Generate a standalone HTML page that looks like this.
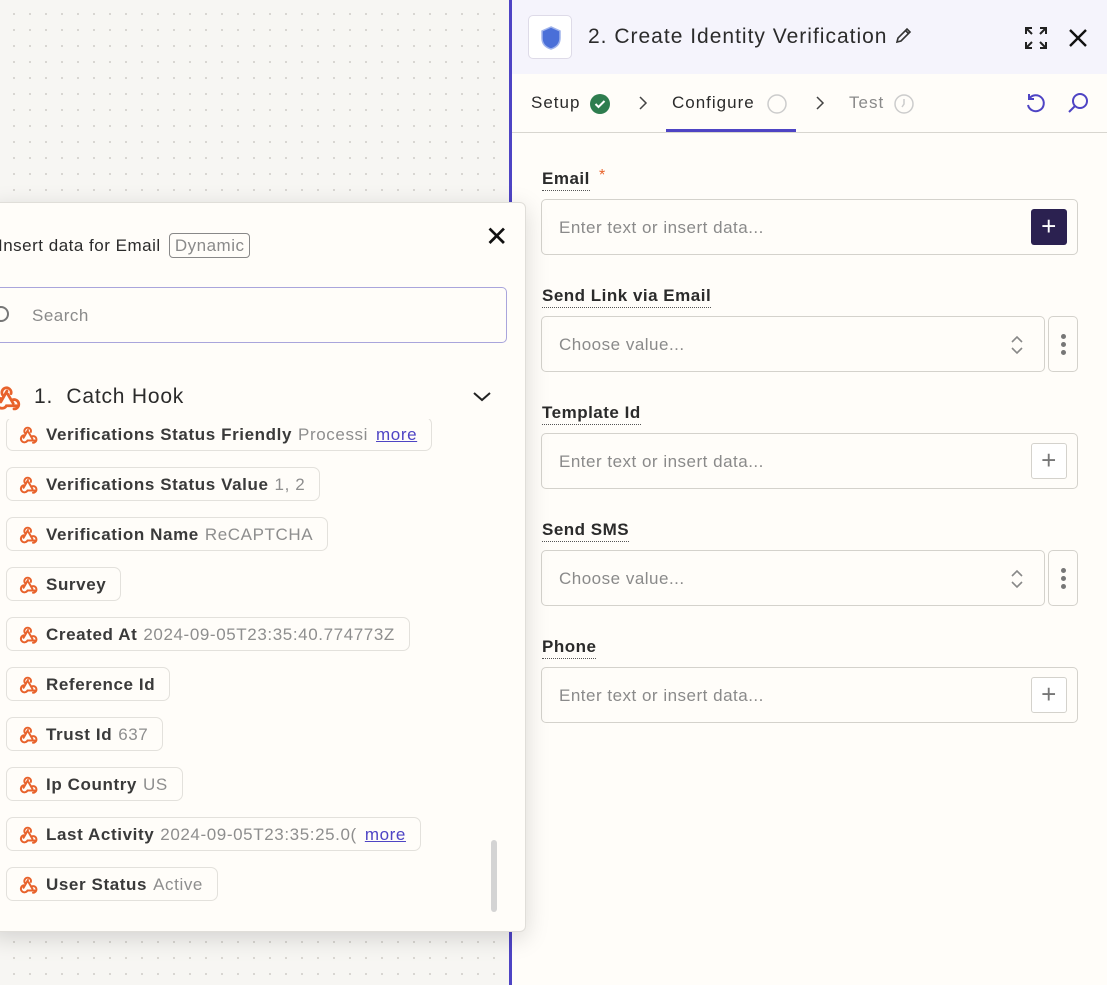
<!DOCTYPE html>
<html><head><meta charset="utf-8"><style>
*{box-sizing:border-box;margin:0;padding:0}
body{width:1107px;height:985px;overflow:hidden;position:relative;font-family:"Liberation Sans",sans-serif;letter-spacing:.5px;background:#f7f6f3;
background-image:radial-gradient(circle,#d6d4cf 1px,transparent 1.2px);background-size:16px 16px;background-position:6px 6px}
.panel{position:absolute;left:509px;top:0;width:598px;height:985px;background:#fffdf9;border-left:3px solid #4e44c4;z-index:1}
.hdr{height:74px;background:#f5f4fc;position:relative}
.logo{position:absolute;left:16px;top:15px;width:44px;height:44px;border:1px solid #dedbe8;border-radius:5px;background:#fff}
.title{position:absolute;left:76px;top:25px;font-size:21px;color:#2b2b2b;letter-spacing:1px}
.tabs{height:59px;border-bottom:1px solid #d8d6d0;position:relative;font-size:17px}
.tabs span{position:absolute;top:19px}
.lbl{position:absolute;font-size:17px;font-weight:bold;color:#2b2b2b;border-bottom:1px dotted #555;padding-bottom:1px}
.inp{position:absolute;height:56px;border:1px solid #d4d2cc;border-radius:5px;background:#fffdf9;font-size:17px;color:#8a8a8a;padding:18px 0 0 17px}
.pbtn{position:absolute;width:36px;height:36px;border:1px solid #d4d2cc;border-radius:3px;background:#fff;color:#777;font-size:26px;text-align:center;line-height:32px}
.dots{position:absolute;width:30px;height:56px;border:1px solid #d4d2cc;border-radius:5px}
.dots i{position:absolute;left:12px;width:5px;height:5px;border-radius:50%;background:#777}
.pop{position:absolute;left:-10px;top:202px;width:536px;height:730px;background:#fffdf9;border:1px solid #e0ded9;border-radius:6px;box-shadow:0 6px 24px rgba(0,0,0,.15);overflow:hidden;z-index:5}
.list{position:absolute;left:0;top:216px;width:500px;height:500px;overflow:hidden}
.item{position:absolute;left:15px;height:34px;border:1px solid #e3e1dc;border-radius:7px;background:#fffdf9;font-size:17px;white-space:nowrap;padding:7px 14px 0 39px;letter-spacing:.6px}
.item b{color:#3a3a3a}
.item em{font-style:normal;color:#8e8e8e;margin-left:6px}
.item u{color:#4e44c4;margin-left:8px}
.item svg{position:absolute;left:11px;top:7px}
</style></head><body>
<svg width="0" height="0" style="position:absolute"><defs><g id="hk" fill="none" stroke="#e8622b" stroke-width="1.8" stroke-linecap="round"><path d="M6.6 7.6A3 3 0 1 1 11.6 6.2"/><path d="M9 4.5L5 11.5"/><path d="M5 9.3A3.2 3.2 0 1 0 8.6 14H15"/><path d="M9.5 6.5L13 12.5"/><path d="M12.5 10.2A3 3 0 1 1 13.5 16"/></g></defs></svg>

<div class="pop">
  <div style="position:absolute;left:7px;top:33px;font-size:17px;color:#2b2b2b">Insert data for Email <span style="border:1px solid #888;border-radius:4px;color:#8a8a8a;padding:2px 5px;font-size:17px;margin-left:3px">Dynamic</span></div>
  <div style="position:absolute;left:494px;top:17px;font-size:28px;color:#111">✕</div>
  <div style="position:absolute;left:0;top:84px;width:516px;height:56px;border:1.5px solid #a9a5dc;border-radius:5px"></div>
  <div style="position:absolute;left:2px;top:103px;width:16px;height:16px;border:2px solid #777;border-radius:50%"></div>
  <div style="position:absolute;left:41px;top:103px;font-size:17px;color:#8a8a8a">Search</div>
  <svg style="position:absolute;left:2px;top:181px" width="28" height="28" viewBox="0 0 18 18"><use href="#hk"/></svg>
  <div style="position:absolute;left:43px;top:182px;font-size:21px;color:#2b2b2b;letter-spacing:.8px">1.&nbsp; Catch Hook</div>
  <svg style="position:absolute;left:481px;top:187px" width="20" height="14"><path d="M2 3l8 7 8-7" fill="none" stroke="#222" stroke-width="2"/></svg>
  <div class="list">
    <div class="item" style="top:-2px"><svg width="20" height="20" viewBox="0 0 18 18"><use href="#hk"/></svg><b>Verifications Status Friendly</b><em>Processi</em><u>more</u></div>
    <div class="item" style="top:48px"><svg width="20" height="20" viewBox="0 0 18 18"><use href="#hk"/></svg><b>Verifications Status Value</b><em>1, 2</em></div>
    <div class="item" style="top:98px"><svg width="20" height="20" viewBox="0 0 18 18"><use href="#hk"/></svg><b>Verification Name</b><em>ReCAPTCHA</em></div>
    <div class="item" style="top:148px"><svg width="20" height="20" viewBox="0 0 18 18"><use href="#hk"/></svg><b>Survey</b></div>
    <div class="item" style="top:198px"><svg width="20" height="20" viewBox="0 0 18 18"><use href="#hk"/></svg><b>Created At</b><em>2024-09-05T23:35:40.774773Z</em></div>
    <div class="item" style="top:248px"><svg width="20" height="20" viewBox="0 0 18 18"><use href="#hk"/></svg><b>Reference Id</b></div>
    <div class="item" style="top:298px"><svg width="20" height="20" viewBox="0 0 18 18"><use href="#hk"/></svg><b>Trust Id</b><em>637</em></div>
    <div class="item" style="top:348px"><svg width="20" height="20" viewBox="0 0 18 18"><use href="#hk"/></svg><b>Ip Country</b><em>US</em></div>
    <div class="item" style="top:398px"><svg width="20" height="20" viewBox="0 0 18 18"><use href="#hk"/></svg><b>Last Activity</b><em>2024-09-05T23:35:25.0(</em><u>more</u></div>
    <div class="item" style="top:448px"><svg width="20" height="20" viewBox="0 0 18 18"><use href="#hk"/></svg><b>User Status</b><em>Active</em></div>
  </div>
  <div style="position:absolute;left:500px;top:637px;width:6px;height:72px;background:#d4d4d4;border-radius:3px"></div>
</div>

<div class="panel">
  <div class="hdr">
    <div class="logo"><svg style="margin:9px 0 0 10px" width="24" height="26" viewBox="0 0 24 26"><path d="M12 2L3 6v7c0 6 4 9.5 9 11 5-1.5 9-5 9-11V6z" fill="#4a6fd8" stroke="#9fb3ec" stroke-width="1.5"/></svg></div>
    <div class="title">2. Create Identity Verification <svg width="20" height="20" viewBox="0 0 20 20" style="vertical-align:-2px"><path d="M3 17l1-4 9-9 3 3-9 9zM11.5 5.5l3 3" fill="none" stroke="#333" stroke-width="1.6"/></svg></div>
    <svg style="position:absolute;left:512px;top:26px" width="24" height="24" viewBox="0 0 24 24" fill="none" stroke="#222" stroke-width="2"><path d="M2 8V2h6M2 2l6 6M16 2h6v6M22 2l-6 6M2 16v6h6M2 22l6-6M22 16v6h-6M22 22l-6-6"/></svg>
    <svg style="position:absolute;left:556px;top:28px" width="20" height="20" viewBox="0 0 20 20" stroke="#111" stroke-width="2.4"><path d="M2 2l16 16M18 2L2 18"/></svg>
  </div>
  <div class="tabs">
    <span style="left:19px;color:#2b2b2b;letter-spacing:1px">Setup</span>
    <svg style="position:absolute;left:78px;top:20px" width="20" height="20"><circle cx="10" cy="10" r="10" fill="#2e7d4f"/><path d="M5.5 10l3 3 6-6" fill="none" stroke="#fff" stroke-width="2"/></svg>
    <svg style="position:absolute;left:126px;top:21px" width="10" height="16"><path d="M2 2l6 6-6 6" fill="none" stroke="#444" stroke-width="1.5"/></svg>
    <span style="left:160px;color:#2b2b2b;letter-spacing:1px">Configure</span>
    <svg style="position:absolute;left:255px;top:20px" width="20" height="20"><circle cx="10" cy="10" r="9" fill="none" stroke="#ccc" stroke-width="1.5"/></svg>
    <div style="position:absolute;left:154px;top:55px;width:130px;height:3px;background:#4e44c4"></div>
    <svg style="position:absolute;left:303px;top:21px" width="10" height="16"><path d="M2 2l6 6-6 6" fill="none" stroke="#444" stroke-width="1.5"/></svg>
    <span style="left:337px;color:#8a8a8a;letter-spacing:1px">Test</span>
    <svg style="position:absolute;left:382px;top:20px" width="20" height="20"><circle cx="10" cy="10" r="9" fill="none" stroke="#ccc" stroke-width="1.5"/><path d="M10 5v5l-2 3" fill="none" stroke="#ccc" stroke-width="1.5"/></svg>
    <svg style="position:absolute;left:512px;top:17px" width="24" height="24" viewBox="0 0 24 24" fill="none" stroke="#4e44c4" stroke-width="2"><path d="M5 8a8 8 0 1 1-1 6M5 3v5h5"/></svg>
    <svg style="position:absolute;left:554px;top:17px" width="24" height="24" viewBox="0 0 24 24" fill="none" stroke="#4e44c4" stroke-width="2"><circle cx="14" cy="10" r="7"/><path d="M9 15l-6 6"/></svg>
  </div>
  <div class="lbl" style="left:30px;top:169px">Email</div><span style="position:absolute;left:87px;top:167px;color:#e8622b">*</span>
  <div class="inp" style="left:29px;top:199px;width:537px">Enter text or insert data...</div>
  <div style="position:absolute;left:519px;top:209px;width:36px;height:36px;background:#2b2150;border-radius:3px;color:#fff;font-size:26px;text-align:center;line-height:34px">+</div>

  <div class="lbl" style="left:30px;top:286px">Send Link via Email</div>
  <div class="inp" style="left:29px;top:316px;width:504px">Choose value...</div>
  <svg style="position:absolute;left:498px;top:334px" width="14" height="22" viewBox="0 0 14 22" fill="none" stroke="#888" stroke-width="1.6"><path d="M2 8l5-5 5 5M2 14l5 5 5-5"/></svg>
  <div class="dots" style="left:536px;top:316px"><i style="top:17px"></i><i style="top:25px"></i><i style="top:33px"></i></div>

  <div class="lbl" style="left:30px;top:403px">Template Id</div>
  <div class="inp" style="left:29px;top:433px;width:537px">Enter text or insert data...</div>
  <div class="pbtn" style="left:519px;top:443px">+</div>

  <div class="lbl" style="left:30px;top:520px">Send SMS</div>
  <div class="inp" style="left:29px;top:550px;width:504px">Choose value...</div>
  <svg style="position:absolute;left:498px;top:568px" width="14" height="22" viewBox="0 0 14 22" fill="none" stroke="#888" stroke-width="1.6"><path d="M2 8l5-5 5 5M2 14l5 5 5-5"/></svg>
  <div class="dots" style="left:536px;top:550px"><i style="top:17px"></i><i style="top:25px"></i><i style="top:33px"></i></div>

  <div class="lbl" style="left:30px;top:637px">Phone</div>
  <div class="inp" style="left:29px;top:667px;width:537px">Enter text or insert data...</div>
  <div class="pbtn" style="left:519px;top:677px">+</div>
</div>
</body></html>
